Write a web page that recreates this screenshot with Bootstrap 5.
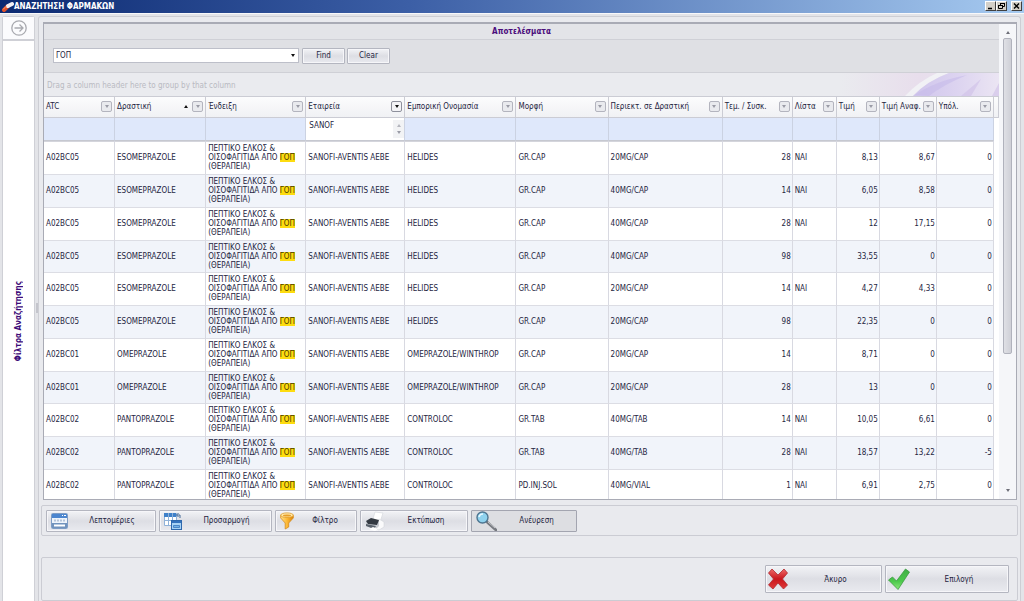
<!DOCTYPE html>
<html lang="el">
<head>
<meta charset="utf-8">
<meta name="viewport" content="width=device-width, initial-scale=1">
<title>ΑΝΑΖΗΤΗΣΗ ΦΑΡΜΑΚΩΝ</title>
<link href="https://cdn.jsdelivr.net/npm/bootstrap@5.3.0/dist/css/bootstrap.min.css" rel="stylesheet">
<style>
  body { font: 8px/9px "DejaVu Sans Condensed", "DejaVu Sans", sans-serif; color: #25253f; background: #e9eaee; }
  button, input { font: inherit; color: inherit; }
  .title-bar { height: 13px; padding: 0 2px 0 2px; background: linear-gradient(90deg, #0c2a72, #3c5fa6 40%, #a6caf0); color: #fff; }
  .title-bar h1 { font: inherit; font-weight: bold; }
  .win-btn { width: 11px; height: 10px; padding: 0; background: #d4d0c8; border: 1px solid; border-color: #fff #404040 #404040 #fff; line-height: 0; }
  .win-btn svg { display: block; }
  .frame-area { border-top: 1px solid #f8f8fa; padding: 2px 3px 0 2px; background: #e3e4e8; }
  .side-pane { width: 33px; background: #fff; border: 1px solid #cfd0d6; border-bottom: 0; border-radius: 3px 3px 0 0; }
  .side-toggle { height: 24px; border: 0; border-bottom: 2px solid #cfd0d6; background: #fbfbfd; padding: 0; }
  .side-label { writing-mode: vertical-rl; transform: rotate(180deg); font-weight: bold; color: #3c0a78; }
  .split-bar { width: 3px; }
  .split-bar i { width: 2px; height: 10px; background: #c4c5cc; }
  .work-area { border: 1px solid #cdced4; border-bottom: 0; border-radius: 3px 3px 0 0; background: #e9eaee; padding: 5px 2px 0 2px; }
  .result-box { border: 1px solid #a9abb5; border-top-width: 2px; margin: 0 1px 0 2px; background: #fff; }
  .result-title { height: 16px; background: #e3e4e8; border-bottom: 1px solid #cfd0d6; color: #4b0d7c; font-weight: bold; }
  .find-area { height: 33px; padding: 0 9px; background: #dfe0e4; border-bottom: 1px solid #cfd0d6; gap: 2px; }
  .find-combo { width: 246px; height: 15px; border: 1px solid #bdbfc9; background: #fff; margin-right: 1px; }
  .find-combo input { border: 0; outline: 0; padding: 0 2px; background: transparent; min-width: 0; }
  .find-combo button { border: 0; background: transparent; width: 11px; padding: 0; }
  .tool-btn { border: 1px solid #b4b6c0; border-radius: 1px; background: linear-gradient(#f2f3f6, #dddee4 50%, #e9eaef); box-shadow: inset 0 0 0 1px #f6f6f9; padding: 0; }
  .find-btn { width: 43px; height: 16px; }
  .group-area { height: 23px; padding-left: 3px; color: #b9bac2; background: #eaebef; overflow: hidden; }
  .group-area span { padding-top: 2px; }
  .swirl { width: 160px; height: 23px; }
  .caret { width: 0; height: 0; border: 2px solid transparent; border-top: 3px solid #111; border-bottom: 0; display: block; margin: auto; }
  .caret-up { border-top: 0; border-bottom: 3px solid #111; }
  .caret-pale { border-top-color: #9a9ba6; border-bottom-color: #b4b5bd; }
  .grid-table { table-layout: fixed; width: 100%; border-collapse: separate; border-spacing: 0; }
  .grid-table th { height: 22px; padding: 0 2px; font-weight: normal; white-space: nowrap; background: linear-gradient(#fcfcfd, #f0f1f4); border: solid #cbccd4; border-width: 1px 1px 1px 0; }
  .grid-table th:last-child { padding: 0; }
  .filter-line td { height: 23px; padding: 0; background: #dfe8fb; border-right: 1px solid #cbd2e2; border-bottom: 1px solid #c6c8d0; }
  .filter-line input { width: 100%; height: 12px; border: 0; outline: 0; padding: 0 3px; background: transparent; }
  .data-line td { height: 33px; padding: 0 2px; vertical-align: middle; border-right: 1px solid #d8d9e1; border-bottom: 1px solid #dcdde4; }
  .data-line:nth-child(4n) td { height: 32px; }
  .data-line:nth-child(even) td { background: #f1f4fa; }
  .data-line td:nth-child(n+8) { padding-right: 1px; }
  .data-line:first-child td { height: 34px; border-top: 1px solid #d4d5dc; }
  .grid-table tr td.blank { background: #fff; border: 0; padding: 0; }
  .grid-table .num { text-align: right; }
  .hit { background: #fddc10; color: #4a3b00; padding: 0; }
  .drop-btn { width: 11px; height: 11px; border: 1px solid #b3b4be; border-radius: 2px; background: #e9eaee; padding: 0; flex: none; }
  .drop-btn.active { border-color: #8e909c; background: #f3f3f6; }
  .spin { width: 11px; background: #f2f3f5; }
  .scroll-col { width: 17px; background: #f5f6f9; padding: 7px 4px; }
  .scroll-thumb { height: 316px; border: 1px solid #b0b2bc; border-radius: 2px; background: linear-gradient(90deg, #dfe0e5, #cfd0d7); }
  .scroll-col button { border: 0; background: none; padding: 0; height: 3px; }
  .scroll-col .caret { border-top-color: #6d6e78; border-bottom-color: #6d6e78; }
  .group-frame { border: 1px solid #cbccd3; border-radius: 2px; }
  .tool-row { height: 31px; padding: 0 4px; gap: 3px; margin-top: 5px; }
  .tool-row .tool-btn { height: 22px; }
  .tool-btn svg { flex: none; }
  .w-a { width: 110px; } .w-b { width: 113px; } .w-c { width: 82px; } .w-d { width: 108px; } .w-e { width: 106px; }
  .tool-row .pressed { background: #dddee2; border-color: #a3a5b0; box-shadow: none; }
  .foot-row { height: 44px; padding: 0 8px; gap: 3px; margin-top: 21px; }
  .foot-row .tool-btn { height: 28px; }
  .w-cancel { width: 117px; } .w-ok { width: 124px; }
</style>
</head>
<body class="vh-100 d-flex flex-column overflow-hidden">

<header class="title-bar d-flex align-items-center">
  <svg width="12" height="11" viewBox="0 0 12 11" aria-hidden="true"><path d="M2 9 6 5" stroke="#e0512a" stroke-width="4" stroke-linecap="round"/><path d="M6 5 10 3" stroke="#f4f1f5" stroke-width="4" stroke-linecap="round"/><path d="M1.500 8 4 5.500" stroke="#ff9d70" stroke-linecap="round"/></svg>
  <h1 class="m-0 flex-grow-1">ΑΝΑΖΗΤΗΣΗ ΦΑΡΜΑΚΩΝ</h1>
  <button class="win-btn" aria-label="Ελαχιστοποίηση"><svg width="9" height="8"><path d="M2 6.500h4" stroke="#000" stroke-width="1.500"/></svg></button>
  <button class="win-btn" aria-label="Επαναφορά"><svg width="9" height="8" fill="none" stroke="#000"><path d="M3.500 3V1.500h4v3H6M1.500 3.500h4v3h-4zM1 3.500h5M3 1.500h5"/></svg></button>
  <button class="win-btn ms-1" aria-label="Κλείσιμο"><svg width="9" height="8"><path d="m2 1.500 5 5m0-5-5 5" stroke="#000" stroke-width="1.400"/></svg></button>
</header>

<div class="frame-area d-flex flex-grow-1 overflow-hidden">
  <aside class="side-pane d-flex flex-column flex-shrink-0">
    <button class="side-toggle d-flex align-items-center justify-content-center" aria-label="Άνοιγμα φίλτρων">
      <svg width="16" height="16" viewBox="0 0 16 16" fill="none" stroke="#a9aab0" stroke-width="1.300"><circle cx="8" cy="8" r="7.200"/><path d="M3.500 8H12M8.500 4.500 12 8l-3.500 3.500"/></svg>
    </button>
    <div class="flex-grow-1 d-flex align-items-center justify-content-center"><span class="side-label">Φίλτρα Αναζήτησης</span></div>
  </aside>
  <div class="split-bar d-flex align-items-center justify-content-center flex-shrink-0"><i></i></div>

  <main class="work-area flex-grow-1 d-flex flex-column overflow-hidden">
    <section class="result-box d-flex flex-grow-1 overflow-hidden">
      <div class="flex-grow-1 overflow-hidden">
        <div class="result-title d-flex align-items-center justify-content-center">Αποτελέσματα</div>
        <form class="find-area d-flex align-items-center" onsubmit="return false">
          <div class="find-combo d-flex">
            <input class="flex-grow-1" value="ΓΟΠ" aria-label="Αναζήτηση">
            <button type="button" aria-label="Ιστορικό"><span class="caret"></span></button>
          </div>
          <button class="tool-btn find-btn">Find</button>
          <button class="tool-btn find-btn" type="reset">Clear</button>
        </form>
        <div class="group-area d-flex align-items-center justify-content-between">
          <span>Drag a column header here to group by that column</span>
          <svg class="swirl" viewBox="0 0 160 23" preserveAspectRatio="none" aria-hidden="true">
            <defs>
              <linearGradient id="sa"><stop offset="0" stop-color="#eaebef"/><stop offset=".5" stop-color="#e8deec"/><stop offset="1" stop-color="#e9e6f2"/></linearGradient>
              <linearGradient id="sb"><stop offset="0" stop-color="#cfc5ec"/><stop offset=".5" stop-color="#dcd3f0"/><stop offset="1" stop-color="#ebe5f3"/></linearGradient>
            </defs>
            <path d="M0 23V0h160v23z" fill="url(#sa)"/>
            <path d="M66 23Q80 8 98 0h12Q88 8 74 23z" fill="#f1f1f5"/>
            <path d="M74 23Q88 8 110 0h50v23z" fill="url(#sb)"/>
            <path d="M76 22Q96 8 128 2 104 12 90 23z" fill="#c6bbea" opacity=".6"/>
            <path d="M122 23 142 6 132 23zM153 23 160 10v13z" fill="#cfc0e8" opacity=".6"/>
          </svg>
        </div>
        <table class="grid-table">
          <colgroup id="cols"></colgroup>
          <thead><tr id="heads"></tr><tr id="filters" class="filter-line"></tr></thead>
          <tbody id="lines"></tbody>
        </table>
      </div>
      <div class="scroll-col d-flex flex-column flex-shrink-0">
        <button aria-label="Πάνω"><span class="caret caret-up"></span></button>
        <div class="scroll-thumb mt-1"></div>
        <button class="mt-auto" aria-label="Κάτω"><span class="caret"></span></button>
      </div>
    </section>

    <div class="group-frame tool-row d-flex align-items-center flex-shrink-0">
      <button class="tool-btn w-a d-flex align-items-center ps-1">
        <svg width="18" height="18" viewBox="0 0 18 18"><rect x=".5" y="1.500" width="16" height="15" rx="1" fill="#eef4fb" stroke="#7d9cc5"/><path d="M1 2h15v4H1z" fill="#4c86cf"/><path d="M11 3.500h1m1 0h2" stroke="#fff"/><path d="M3 8.500h11" stroke="#b4c4da" stroke-width="2" stroke-dasharray="2 1"/><path d="M1 11h15v5H1z" fill="#7193bd"/><path d="M3 13.500h11" stroke="#fff" stroke-width="2"/></svg>
        <span class="flex-grow-1">Λεπτομέριες</span>
      </button>
      <button class="tool-btn w-b d-flex align-items-center ps-1">
        <svg width="18" height="18" viewBox="0 0 18 18"><path d="M.5 1.500h12v12H.5z" fill="#fff" stroke="#8fb1d8"/><path d="M0 1h12v4H0z" fill="#3e80c9"/><path d="M4.500 1v12M8.500 1v12M0 8.500h12" stroke="#8fb1d8"/><path d="M16 6V3h-3m1.500-2-2 2 2 2" fill="none" stroke="#456a98"/><rect x="7.500" y="8.500" width="10" height="9" fill="#a8d2f4" stroke="#2e68ad"/><path d="M8 9h9v2H8z" fill="#3472bd"/><path d="M9.500 13.500h6v2h-6z" fill="#72b0e8" stroke="#4a86c6"/></svg>
        <span class="flex-grow-1">Προσαρμογή</span>
      </button>
      <button class="tool-btn w-c d-flex align-items-center ps-1">
        <svg width="14" height="18" viewBox="0 0 14 18"><defs><linearGradient id="fg"><stop stop-color="#ffe08a"/><stop offset=".5" stop-color="#fdb935"/><stop offset="1" stop-color="#d98208"/></linearGradient></defs><path d="M.7 3v3l4.500 5v6l3.500-2v-4L13.300 6V3z" fill="url(#fg)" stroke="#d58a1a" stroke-width=".8"/><ellipse cx="7" cy="3.200" rx="6.300" ry="2.300" fill="#ffe9a8" stroke="#e09c2a" stroke-width=".8"/><ellipse cx="7" cy="3.500" rx="4" ry="1" fill="#e79e28"/></svg>
        <span class="flex-grow-1">Φίλτρο</span>
      </button>
      <button class="tool-btn w-d d-flex align-items-center ps-1">
        <svg width="20" height="20" viewBox="0 0 20 20"><path d="m8 8 2-7 8 1-3 9z" fill="#fff" stroke="#d2d5da" stroke-width=".6"/><path d="m14 8 5 3v5l-5 3-5-2z" fill="#fafafb" stroke="#cdd0d6" stroke-width=".5"/><path d="m1 11 5-3 8 2v5l-3 3-10-3z" fill="#c9ccd2"/><path d="m1 10 5-3 8 2-2 5-9-1z" fill="#343a42"/><path d="m1 13 10 2-2 3-8-3z" fill="#59616b"/><path d="m4 18 4-2 5 2-3 2z" fill="#fff"/></svg>
        <span class="flex-grow-1">Εκτύπωση</span>
      </button>
      <button class="tool-btn pressed w-e d-flex align-items-center ps-1" aria-pressed="true">
        <svg width="21" height="20" viewBox="0 0 21 20"><path d="m11 11 9 8" stroke="#777a80" stroke-width="2.800" stroke-linecap="round"/><path d="m12 11 7 6" stroke="#c6c8cc" stroke-width="1"/><circle cx="6.500" cy="6.500" r="5.500" fill="#8fd2ee" stroke="#4e7590" stroke-width="1.400"/><path d="M3 6a4 4 0 0 1 4-3" stroke="#e8f8ff" stroke-width="1.600" fill="none"/></svg>
        <span class="flex-grow-1">Ανέυρεση</span>
      </button>
    </div>

    <div class="group-frame foot-row d-flex align-items-center justify-content-end flex-shrink-0">
      <button class="tool-btn w-cancel d-flex align-items-center">
        <svg width="24" height="22" viewBox="-2 0 24 22"><defs><linearGradient id="rg" x2="0" y2="1"><stop stop-color="#ee6a68"/><stop offset=".5" stop-color="#c9161c"/><stop offset="1" stop-color="#e03a3a"/></linearGradient></defs><path d="m4 1 6 6 6-6 3.500 4-5 6 5 6-4 4-5.500-6-5 6L.5 17l5-6L.5 5z" fill="url(#rg)" stroke="#b02a30" stroke-width=".8" stroke-linejoin="round"/></svg>
        <span class="flex-grow-1">Άκυρο</span>
      </button>
      <button class="tool-btn w-ok d-flex align-items-center">
        <svg width="24" height="22" viewBox="-2 0 24 22"><defs><linearGradient id="gg" x2="0" y2="1"><stop stop-color="#3fae46"/><stop offset=".6" stop-color="#4cc94c"/><stop offset="1" stop-color="#8de87c"/></linearGradient></defs><path d="m.5 12 4-3 4 4 9-12 4 3L10 21.500z" fill="url(#gg)" stroke="#3a9a40" stroke-width=".8" stroke-linejoin="round"/></svg>
        <span class="flex-grow-1">Επιλογή</span>
      </button>
    </div>
  </main>
</div>

<script>
  // Column caption, width and optional state
  const columns = [
    ['ATC', 71], ['Δραστική', 91, 'sorted'], ['Ένδειξη', 100], ['Εταιρεία', 99, 'filtered'],
    ['Εμπορική Ονομασία', 111], ['Μορφή', 92], ['Περιεκτ. σε Δραστική', 114], ['Τεμ. / Συσκ.', 70],
    ['Λίστα', 44], ['Τιμή', 43], ['Τιμή Αναφ.', 57], ['Υπόλ.', 57]
  ];
  const use = 'ΠΕΠΤΙΚΟ ΕΛΚΟΣ &amp; ΟΙΣΟΦΑΓΙΤΙΔΑ ΑΠΟ <mark class="hit">ΓΟΠ</mark> (ΘΕΡΑΠΕΙΑ)';
  const firm = 'SANOFI-AVENTIS AEBE';
  const drugs = [
    ['A02BC05', 'ESOMEPRAZOLE', 'HELIDES', 'GR.CAP', '20MG/CAP', 28, 'ΝΑΙ', '8,13', '8,67', 0],
    ['A02BC05', 'ESOMEPRAZOLE', 'HELIDES', 'GR.CAP', '40MG/CAP', 14, 'ΝΑΙ', '6,05', '8,58', 0],
    ['A02BC05', 'ESOMEPRAZOLE', 'HELIDES', 'GR.CAP', '40MG/CAP', 28, 'ΝΑΙ', '12', '17,15', 0],
    ['A02BC05', 'ESOMEPRAZOLE', 'HELIDES', 'GR.CAP', '40MG/CAP', 98, '', '33,55', '0', 0],
    ['A02BC05', 'ESOMEPRAZOLE', 'HELIDES', 'GR.CAP', '20MG/CAP', 14, 'ΝΑΙ', '4,27', '4,33', 0],
    ['A02BC05', 'ESOMEPRAZOLE', 'HELIDES', 'GR.CAP', '20MG/CAP', 98, '', '22,35', '0', 0],
    ['A02BC01', 'OMEPRAZOLE', 'OMEPRAZOLE/WINTHROP', 'GR.CAP', '20MG/CAP', 14, '', '8,71', '0', 0],
    ['A02BC01', 'OMEPRAZOLE', 'OMEPRAZOLE/WINTHROP', 'GR.CAP', '20MG/CAP', 28, '', '13', '0', 0],
    ['A02BC02', 'PANTOPRAZOLE', 'CONTROLOC', 'GR.TAB', '40MG/TAB', 14, 'ΝΑΙ', '10,05', '6,61', 0],
    ['A02BC02', 'PANTOPRAZOLE', 'CONTROLOC', 'GR.TAB', '40MG/TAB', 28, 'ΝΑΙ', '18,57', '13,22', -5],
    ['A02BC02', 'PANTOPRAZOLE', 'CONTROLOC', 'PD.INJ.SOL', '40MG/VIAL', 1, 'ΝΑΙ', '6,91', '2,75', 0]
  ];
  const put = (id, html) => document.getElementById(id).innerHTML = html;
  put('cols', columns.map(c => `<col style="width:${c[1]}px">`).join('') + '<col style="width:5px">');
  put('heads', columns.map(([name, , state]) =>
    `<th scope="col"><div class="d-flex align-items-center"><span class="flex-grow-1">${name}</span>` +
    (state === 'sorted' ? '<span class="caret caret-up m-0 me-1"></span>' : '') +
    `<button class="drop-btn ${state === 'filtered' ? 'active' : ''}" aria-label="Φίλτρο ${name}"><span class="caret ${state === 'filtered' ? '' : 'caret-pale'}"></span></button></div></th>`
  ).join('') + '<th></th>');
  put('filters', columns.map(([name, , state]) => state === 'filtered'
    ? `<td class="bg-white"><div class="d-flex"><input value="SANOF" aria-label="${name}"><div class="spin d-flex flex-column py-1 gap-1 flex-shrink-0"><span class="caret caret-up caret-pale"></span><span class="caret caret-pale"></span></div></div></td>`
    : '<td></td>').join('') + '<td class="blank"></td>');
  put('lines', drugs.map(([atc, name, ...rest]) =>
    '<tr class="data-line">' + [atc, name, use, firm, ...rest].map((v, i) =>
      `<td${[7, 9, 10, 11].includes(i) ? ' class="num"' : ''}>${v}</td>`).join('') + '<td class="blank"></td></tr>'
  ).join(''));
</script>
<script src="https://cdn.jsdelivr.net/npm/bootstrap@5.3.0/dist/js/bootstrap.bundle.min.js"></script>
</body>
</html>
